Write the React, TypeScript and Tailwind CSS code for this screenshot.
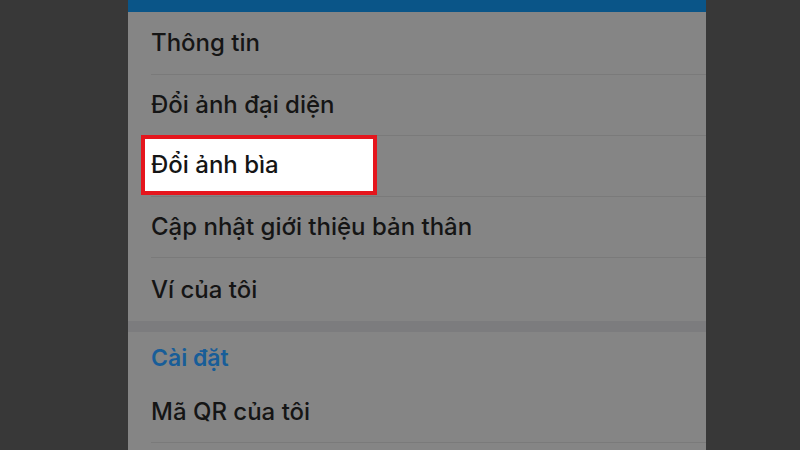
const font = { fontFamily: 'Inter, "Noto Sans", sans-serif' };

function Row({ label, last }: { label: string; last?: boolean }) {
  return (
    <div className="h-[61px] pl-[23px] flex flex-col">
      <div className="flex-1 flex items-center text-[24px] font-medium text-[#151515]">{label}</div>
      {!last && <div className="h-px bg-[#7a7a7a]" />}
    </div>
  );
}

export default function App() {
  return (
    <div className="w-[800px] h-[450px] bg-[#383838] flex pl-[128px] overflow-hidden" style={font}>
      <div className="w-[578px] bg-[#858585] flex flex-col">
        <div className="h-[12px] bg-[#0a5588]" />
        <div className="h-[63px] pl-[23px] flex flex-col">
          <div className="flex-1 flex items-center text-[24px] font-medium text-[#151515]">Thông tin</div>
          <div className="h-px bg-[#7a7a7a]" />
        </div>
        <Row label="Đổi ảnh đại diện" />
        {/* highlighted row */}
        <div className="h-[61px] pl-[13px] flex flex-col relative">
          <div className="absolute left-[13px] -top-px w-[236px] h-[60px] border-4 border-[#e5161d] bg-white flex items-center pl-[6px] text-[24px] font-medium text-[#151515]">
            Đổi ảnh bìa
          </div>
          <div className="flex-1" />
          <div className="h-px bg-[#7a7a7a] ml-[10px]" />
        </div>
        <Row label="Cập nhật giới thiệu bản thân" />
        <div className="h-[63px] pl-[23px] flex items-center text-[24px] font-medium text-[#151515]">Ví của tôi</div>
        <div className="h-[11px] bg-[#7c7c7e]" />
        <div className="h-[50px] pl-[23px] flex items-center text-[23px] font-semibold text-[#185d98] pt-[2px]">Cài đặt</div>
        <Row label="Mã QR của tôi" />
        <div className="flex-1" />
      </div>
    </div>
  );
}
